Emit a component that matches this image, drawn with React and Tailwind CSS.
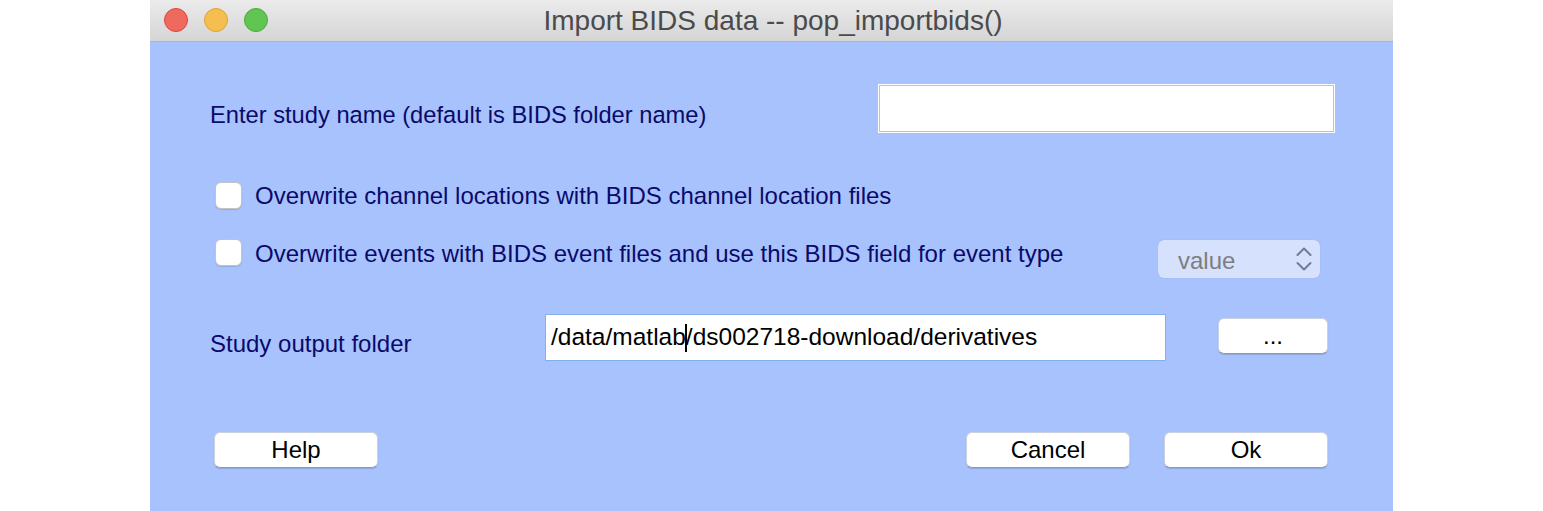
const font = { fontFamily: '"Liberation Sans", Arial, sans-serif' };

function Checkbox() {
  return (
    <span className="inline-block h-[27px] w-[27px] shrink-0 rounded-[6px] border border-[#c4c4c4] bg-white shadow-[0_1px_1px_rgba(0,0,0,0.12)]" />
  );
}

function Button({ children, className = "" }) {
  return (
    <button
      type="button"
      className={`flex h-[36px] items-center justify-center rounded-[6px] border border-[#c9d0e0] border-b-[#8f9bb8] bg-white text-[24px] text-black shadow-[0_1px_1px_rgba(0,0,0,0.15)] ${className}`}
    >
      {children}
    </button>
  );
}

function UpDown() {
  return (
    <svg width="16" height="26" viewBox="0 0 16 26" fill="none" stroke="#717b93" strokeWidth="2" strokeLinecap="round" strokeLinejoin="round">
      <polyline points="1.5,9 8,2.5 14.5,9" />
      <polyline points="1.5,17 8,23.5 14.5,17" />
    </svg>
  );
}

export default function App() {
  return (
    <div className="h-[511px] w-full overflow-hidden bg-white" style={font}>
      <div className="ml-[150px] flex h-[511px] w-[1243px] flex-col bg-[#a8c2fe]">
        <header className="relative flex h-[42px] shrink-0 items-center justify-center border-b border-[#b3b3b3] bg-gradient-to-b from-[#ebebeb] to-[#d5d5d5]">
          <div className="absolute left-[14px] top-[8px] flex gap-[16px]">
            <span className="h-[24px] w-[24px] rounded-full border border-[#e0443e] bg-[#ee6a5f]" />
            <span className="h-[24px] w-[24px] rounded-full border border-[#dea236] bg-[#f5bf4f]" />
            <span className="h-[24px] w-[24px] rounded-full border border-[#4ea83a] bg-[#61c554]" />
          </div>
          <h1 className="ml-[3px] text-[28px] leading-none text-[#4b4b4b]">Import BIDS data -- pop_importbids()</h1>
        </header>

        <main className="flex flex-col pl-[60px] text-[24px] text-[#0a0a6a]">
          <div className="mt-[42px] flex h-[49px] items-center">
            <span className="mt-[14px] w-[668px] text-[23.7px]">Enter study name (default is BIDS folder name)</span>
            <div className="h-[49px] w-[457px] border border-white bg-white outline outline-1 -outline-offset-2 outline-[#c3c3c3]" />
          </div>

          <div className="mt-[49px] flex h-[27px] items-center gap-[13px] pl-[5px]">
            <Checkbox />
            <span className="mt-[1px]">Overwrite channel locations with BIDS channel location files</span>
          </div>

          <div className="mt-[29px] flex h-[40px] items-start pl-[5px]">
            <div className="flex h-[28px] items-center gap-[13px]">
              <Checkbox />
              <span className="mt-[3px]">Overwrite events with BIDS event files and use this BIDS field for event type</span>
            </div>
            <div className="ml-auto mr-[73px] mt-[2px] flex h-[38px] w-[162px] items-center justify-between rounded-[6px] bg-[#d5e1fd] pl-[20px] pr-[8px] text-[#7e7e7e] shadow-[0_0_1px_rgba(0,0,0,0.2)]">
              <span className="mt-[3px]">value</span>
              <UpDown />
            </div>
          </div>

          <div className="mt-[36px] flex h-[47px] items-center">
            <span className="mt-[12px] w-[335px]">Study output folder</span>
            <div className="flex h-[47px] w-[621px] items-center border border-[#7fb2ec] bg-white pl-[5px] text-[24.5px] text-black">
              <span>/data/matlab</span>
              <span className="mx-[-1px] h-[28px] w-[2px] bg-black" />
              <span>/ds002718-download/derivatives</span>
            </div>
            <Button className="ml-[52px] mt-[-3px] w-[110px]">...</Button>
          </div>

          <div className="mt-[71px] flex items-center pl-[4px]">
            <Button className="w-[164px]">Help</Button>
            <Button className="ml-[588px] w-[164px]">Cancel</Button>
            <Button className="ml-[34px] w-[164px]">Ok</Button>
          </div>
        </main>
      </div>
    </div>
  );
}
